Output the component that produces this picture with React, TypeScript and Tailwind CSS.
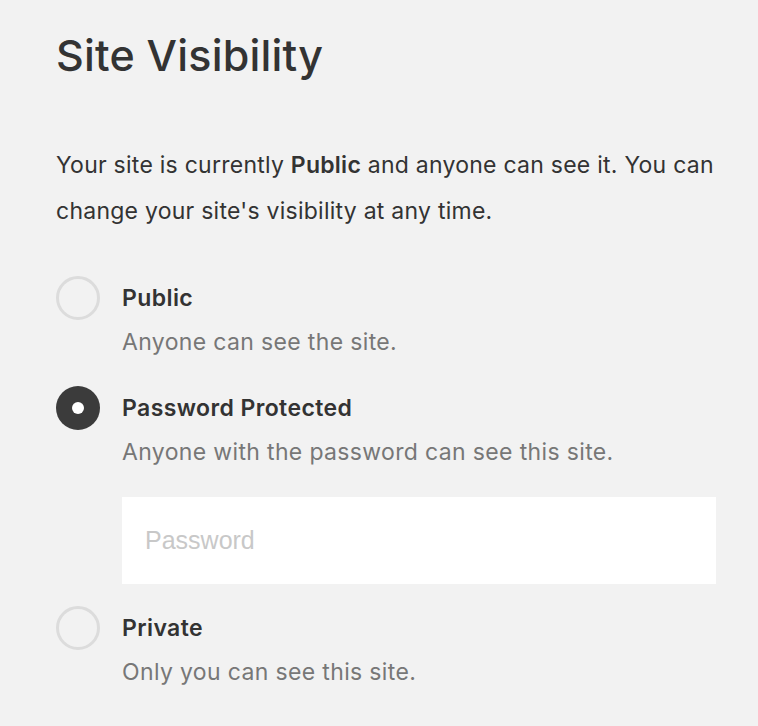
import React from "react";

const font = { fontFamily: "Inter, 'Noto Sans', sans-serif" };

function Radio({ checked }: { checked?: boolean }) {
  return checked ? (
    <div className="w-[44px] h-[44px] rounded-full bg-[#3b3b3b] flex items-center justify-center shrink-0">
      <div className="w-[12px] h-[12px] rounded-full bg-white" />
    </div>
  ) : (
    <div className="w-[44px] h-[44px] rounded-full border-[3px] border-[#dcdcdc] shrink-0" />
  );
}

function Option({ label, desc, checked, children }: { label: string; desc: string; checked?: boolean; children?: React.ReactNode }) {
  return (
    <div className="flex gap-[22px]">
      <Radio checked={checked} />
      <div className="flex-1">
        <div className="h-[44px] flex items-center text-[23px] tracking-[0.4px] font-semibold text-[#333]">{label}</div>
        <div className="h-[44px] flex items-center text-[23px] tracking-[0.35px] text-[#777]">{desc}</div>
        {children}
      </div>
    </div>
  );
}

export default function App() {
  return (
    <div className="w-[758px] h-[726px] bg-[#f2f2f2] pl-[56px] pr-[30px] overflow-hidden" style={font}>
      <h1 className="pt-[28px] h-[84px] text-[43px] font-medium text-[#333] leading-[54px] tracking-[0.2px]">Site Visibility</h1>
      <p className="mt-[58px] text-[23px] leading-[46px] tracking-[0.25px] text-[#333]">
        Your site is currently <span className="font-semibold">Public</span> and anyone can see it. You can<br />change your site's visibility at any time.
      </p>
      <div className="mt-[42px] flex flex-col gap-[22px]">
        <Option label="Public" desc="Anyone can see the site." />
        <Option label="Password Protected" desc="Anyone with the password can see this site." checked>
          <div className="mt-[23px] mr-[12px] h-[87px] bg-white flex items-center px-[23px]">
            <span className="text-[25px] text-[#c8c8c8]" style={{ fontFamily: "'Liberation Sans', Arial, sans-serif" }}>Password</span>
          </div>
        </Option>
        <Option label="Private" desc="Only you can see this site." />
      </div>
    </div>
  );
}
